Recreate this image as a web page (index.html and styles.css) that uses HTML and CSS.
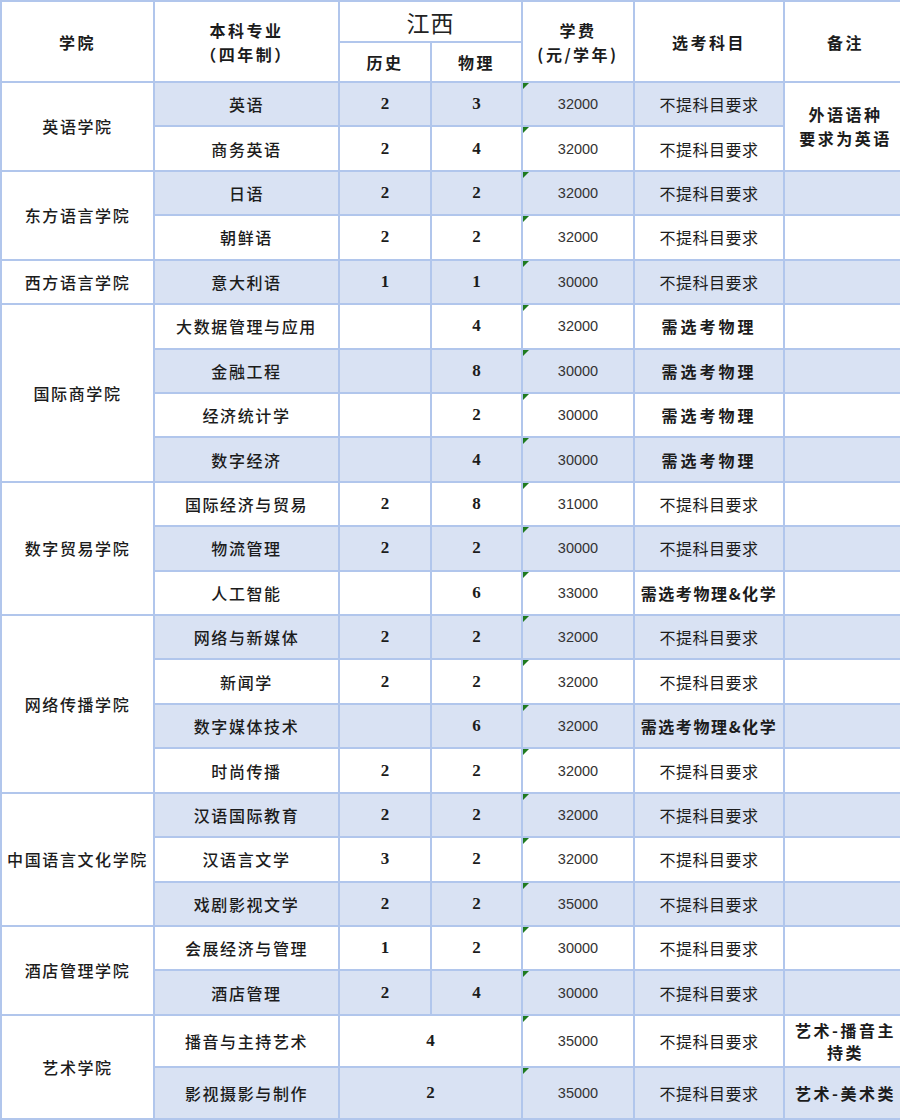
FILE: index.html
```html
<!DOCTYPE html>
<html lang="zh-CN">
<head>
<meta charset="utf-8">
<title>江西招生专业</title>
<link rel="stylesheet" href="styles.css">
</head>
<body>
<div class="sheet">
<table class="grid">
  <colgroup>
    <col class="c-college">
    <col class="c-major">
    <col class="c-hist">
    <col class="c-phys">
    <col class="c-fee">
    <col class="c-subj">
    <col class="c-note">
  </colgroup>
  <thead>
    <tr class="h1">
      <th rowspan="2" class="hd">学院</th>
      <th rowspan="2" class="hd">本科专业<br>（四年制）</th>
      <th colspan="2" class="prov">江西</th>
      <th rowspan="2" class="hd">学费<br>(元/学年)</th>
      <th rowspan="2" class="hd">选考科目</th>
      <th rowspan="2" class="hd">备注</th>
    </tr>
    <tr class="h2">
      <th class="hd">历史</th>
      <th class="hd">物理</th>
    </tr>
  </thead>
  <tbody>
    <tr class="sh">
      <td rowspan="2" class="col">英语学院</td>
      <td class="maj">英语</td><td class="n">2</td><td class="n">3</td><td class="fee">32000</td><td class="subj">不提科目要求</td>
      <td rowspan="2" class="note plain">外语语种<br>要求为英语</td>
    </tr>
    <tr>
      <td class="maj">商务英语</td><td class="n">2</td><td class="n">4</td><td class="fee">32000</td><td class="subj">不提科目要求</td>
    </tr>
    <tr class="sh">
      <td rowspan="2" class="col">东方语言学院</td>
      <td class="maj">日语</td><td class="n">2</td><td class="n">2</td><td class="fee">32000</td><td class="subj">不提科目要求</td><td class="note"></td>
    </tr>
    <tr>
      <td class="maj">朝鲜语</td><td class="n">2</td><td class="n">2</td><td class="fee">32000</td><td class="subj">不提科目要求</td><td class="note"></td>
    </tr>
    <tr class="sh">
      <td class="col">西方语言学院</td>
      <td class="maj">意大利语</td><td class="n">1</td><td class="n">1</td><td class="fee">30000</td><td class="subj">不提科目要求</td><td class="note"></td>
    </tr>
    <tr>
      <td rowspan="4" class="col">国际商学院</td>
      <td class="maj">大数据管理与应用</td><td class="n"></td><td class="n">4</td><td class="fee">32000</td><td class="subj req">需选考物理</td><td class="note"></td>
    </tr>
    <tr class="sh">
      <td class="maj">金融工程</td><td class="n"></td><td class="n">8</td><td class="fee">30000</td><td class="subj req">需选考物理</td><td class="note"></td>
    </tr>
    <tr>
      <td class="maj">经济统计学</td><td class="n"></td><td class="n">2</td><td class="fee">30000</td><td class="subj req">需选考物理</td><td class="note"></td>
    </tr>
    <tr class="sh">
      <td class="maj">数字经济</td><td class="n"></td><td class="n">4</td><td class="fee">30000</td><td class="subj req">需选考物理</td><td class="note"></td>
    </tr>
    <tr>
      <td rowspan="3" class="col">数字贸易学院</td>
      <td class="maj">国际经济与贸易</td><td class="n">2</td><td class="n">8</td><td class="fee">31000</td><td class="subj">不提科目要求</td><td class="note"></td>
    </tr>
    <tr class="sh">
      <td class="maj">物流管理</td><td class="n">2</td><td class="n">2</td><td class="fee">30000</td><td class="subj">不提科目要求</td><td class="note"></td>
    </tr>
    <tr>
      <td class="maj">人工智能</td><td class="n"></td><td class="n">6</td><td class="fee">33000</td><td class="subj req tight">需选考物理&amp;化学</td><td class="note"></td>
    </tr>
    <tr class="sh">
      <td rowspan="4" class="col">网络传播学院</td>
      <td class="maj">网络与新媒体</td><td class="n">2</td><td class="n">2</td><td class="fee">32000</td><td class="subj">不提科目要求</td><td class="note"></td>
    </tr>
    <tr>
      <td class="maj">新闻学</td><td class="n">2</td><td class="n">2</td><td class="fee">32000</td><td class="subj">不提科目要求</td><td class="note"></td>
    </tr>
    <tr class="sh">
      <td class="maj">数字媒体技术</td><td class="n"></td><td class="n">6</td><td class="fee">32000</td><td class="subj req tight">需选考物理&amp;化学</td><td class="note"></td>
    </tr>
    <tr>
      <td class="maj">时尚传播</td><td class="n">2</td><td class="n">2</td><td class="fee">32000</td><td class="subj">不提科目要求</td><td class="note"></td>
    </tr>
    <tr class="sh">
      <td rowspan="3" class="col">中国语言文化学院</td>
      <td class="maj">汉语国际教育</td><td class="n">2</td><td class="n">2</td><td class="fee">32000</td><td class="subj">不提科目要求</td><td class="note"></td>
    </tr>
    <tr>
      <td class="maj">汉语言文学</td><td class="n">3</td><td class="n">2</td><td class="fee">32000</td><td class="subj">不提科目要求</td><td class="note"></td>
    </tr>
    <tr class="sh">
      <td class="maj">戏剧影视文学</td><td class="n">2</td><td class="n">2</td><td class="fee">35000</td><td class="subj">不提科目要求</td><td class="note"></td>
    </tr>
    <tr>
      <td rowspan="2" class="col">酒店管理学院</td>
      <td class="maj">会展经济与管理</td><td class="n">1</td><td class="n">2</td><td class="fee">30000</td><td class="subj">不提科目要求</td><td class="note"></td>
    </tr>
    <tr class="sh">
      <td class="maj">酒店管理</td><td class="n">2</td><td class="n">4</td><td class="fee">30000</td><td class="subj">不提科目要求</td><td class="note"></td>
    </tr>
    <tr class="art">
      <td rowspan="2" class="col">艺术学院</td>
      <td class="maj">播音与主持艺术</td><td colspan="2" class="n">4</td><td class="fee">35000</td><td class="subj">不提科目要求</td><td class="note bold">艺术-播音主持类</td>
    </tr>
    <tr class="art sh">
      <td class="maj">影视摄影与制作</td><td colspan="2" class="n">2</td><td class="fee">35000</td><td class="subj">不提科目要求</td><td class="note bold">艺术-美术类</td>
    </tr>
  </tbody>
</table>
</div>
</body>
</html>
```

FILE: styles.css
```css
html, body {
  margin: 0;
  padding: 0;
  background: #ffffff;
  overflow: hidden;
}

.sheet {
  width: 900px;
  height: 1120px;
  overflow: hidden;
}

.grid {
  border-collapse: collapse;
  table-layout: fixed;
  width: 906px;
  color: #1c1c1c;
  font-family: "Noto Sans CJK SC", "Noto Sans", sans-serif;
  font-size: 16px;
}

.c-college { width: 153px; }
.c-major { width: 185px; }
.c-hist { width: 92px; }
.c-phys { width: 91px; }
.c-fee { width: 112px; }
.c-subj { width: 150px; }
.c-note { width: 123px; }

.grid th,
.grid td {
  border: 2px solid #b1c6ec;
  padding: 0 2px;
  text-align: center;
  vertical-align: middle;
  overflow: hidden;
}

.h1 { height: 41px; }
.h2 { height: 40px; }

.grid tbody tr { height: 44.43px; }
.grid tbody tr.art { height: 52px; }

.hd {
  font-weight: 700;
  letter-spacing: 2.5px;
  line-height: 24px;
  padding-top: 4px;
}

.prov {
  font-weight: 400;
  font-size: 23px;
  letter-spacing: 1px;
  line-height: 26px;
  color: #222;
}

.col {
  background: #ffffff;
  font-weight: 500;
  letter-spacing: 1.6px;
  white-space: nowrap;
}

.maj {
  font-weight: 500;
  letter-spacing: 1.6px;
  white-space: nowrap;
}

.n {
  font-family: "Liberation Serif", "Times New Roman", serif;
  font-weight: 700;
  font-size: 17px;
}

.fee {
  position: relative;
  font-family: "Liberation Sans", Arial, sans-serif;
  font-size: 14.5px;
  color: #333333;
}

.fee::before {
  content: "";
  position: absolute;
  top: 0;
  left: 0;
  border-top: 6px solid #1f7a1f;
  border-right: 6px solid transparent;
}

.subj {
  letter-spacing: 0.5px;
  white-space: nowrap;
}

.req {
  font-weight: 700;
  letter-spacing: 3px;
}

.req.tight {
  letter-spacing: 1.6px;
}

.note {
  line-height: 24px;
}

.note.plain,
.note.bold {
  font-weight: 700;
  letter-spacing: 2.5px;
}

.note.bold {
  line-height: 22px;
  padding: 0 4px;
}

.grid tbody tr.sh td {
  background: #d9e2f3;
}

.grid tbody tr.sh td.col,
.grid tbody tr.sh td.plain {
  background: #ffffff;
}
```
